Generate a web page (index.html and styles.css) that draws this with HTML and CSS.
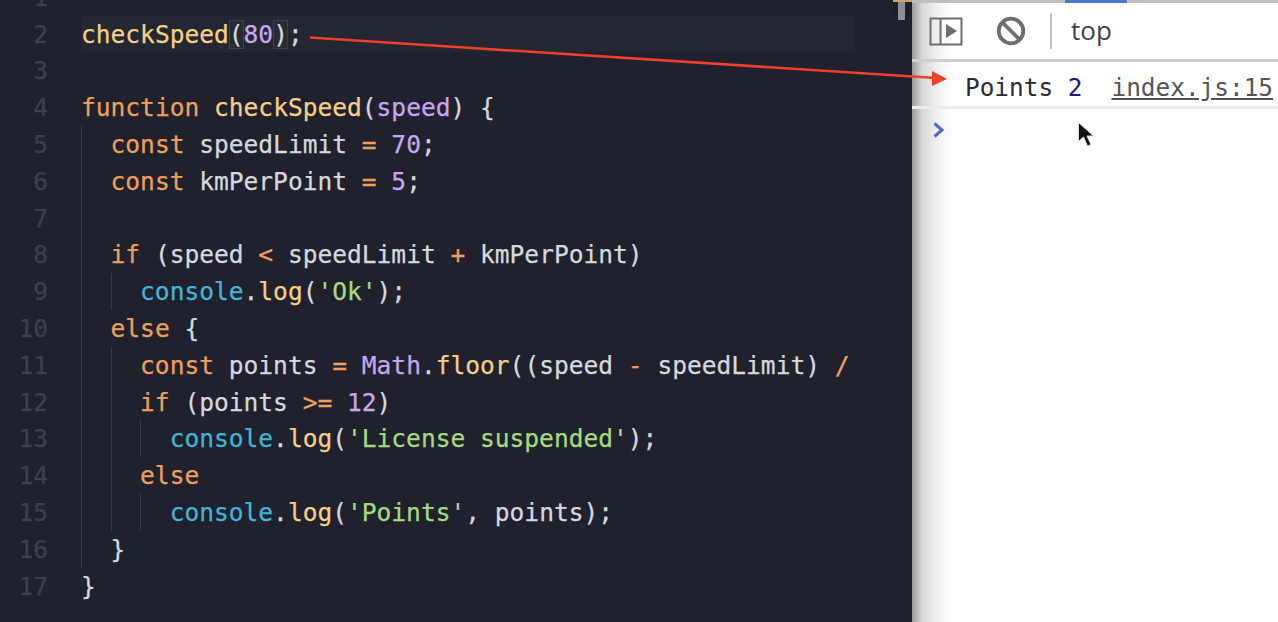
FILE: index.html
```html
<!DOCTYPE html>
<html lang="en">
<head>
<meta charset="utf-8">
<title>checkSpeed</title>
<link rel="stylesheet" href="styles.css">
</head>
<body>
<div class="app">
  <main class="editor">
    <div class="code">
      <div class="row first"><span class="num">1</span><div class="line"></div></div>
      <div class="row active"><span class="num">2</span><div class="line"><span class="txt"><span class="fn">checkSpeed</span><span class="br">(</span><span class="nm">80</span><span class="br">)</span>;</span></div></div>
      <div class="row"><span class="num">3</span><div class="line"></div></div>
      <div class="row"><span class="num">4</span><div class="line"><span class="txt"><span class="kw">function</span> <span class="fn">checkSpeed</span>(<span class="pr">speed</span>) {</span></div></div>
      <div class="row"><span class="num">5</span><div class="line"><i class="g"></i><span class="txt"><span class="kw">const</span> speedLimit <span class="kw">=</span> <span class="nm">70</span>;</span></div></div>
      <div class="row"><span class="num">6</span><div class="line"><i class="g"></i><span class="txt"><span class="kw">const</span> kmPerPoint <span class="kw">=</span> <span class="nm">5</span>;</span></div></div>
      <div class="row"><span class="num">7</span><div class="line"><i class="g"></i></div></div>
      <div class="row"><span class="num">8</span><div class="line"><i class="g"></i><span class="txt"><span class="kw">if</span> (speed <span class="kw">&lt;</span> speedLimit <span class="kw">+</span> kmPerPoint)</span></div></div>
      <div class="row"><span class="num">9</span><div class="line"><i class="g"></i><i class="g"></i><span class="txt"><span class="ob">console</span>.<span class="fn">log</span>(<span class="st">'Ok'</span>);</span></div></div>
      <div class="row"><span class="num">10</span><div class="line"><i class="g"></i><span class="txt"><span class="kw">else</span> {</span></div></div>
      <div class="row"><span class="num">11</span><div class="line"><i class="g"></i><i class="g"></i><span class="txt"><span class="kw">const</span> points <span class="kw">=</span> <span class="nm">Math</span>.<span class="fn">floor</span>((speed <span class="kw">-</span> speedLimit) <span class="kw">/</span></span></div></div>
      <div class="row"><span class="num">12</span><div class="line"><i class="g"></i><i class="g"></i><span class="txt"><span class="kw">if</span> (points <span class="kw">&gt;=</span> <span class="nm">12</span>)</span></div></div>
      <div class="row"><span class="num">13</span><div class="line"><i class="g"></i><i class="g"></i><i class="g"></i><span class="txt"><span class="ob">console</span>.<span class="fn">log</span>(<span class="st">'License suspended'</span>);</span></div></div>
      <div class="row"><span class="num">14</span><div class="line"><i class="g"></i><i class="g"></i><span class="txt"><span class="kw">else</span></span></div></div>
      <div class="row"><span class="num">15</span><div class="line"><i class="g"></i><i class="g"></i><i class="g"></i><span class="txt"><span class="ob">console</span>.<span class="fn">log</span>(<span class="st">'Points'</span>, points);</span></div></div>
      <div class="row"><span class="num">16</span><div class="line"><i class="g"></i><span class="txt">}</span></div></div>
      <div class="row"><span class="num">17</span><div class="line"><span class="txt">}</span></div></div>
    </div>
    <div class="rail"><span class="thumb"></span></div>
  </main>
  <aside class="devtools">
    <div class="tabstrip"><span class="tab"></span></div>
    <div class="toolbar">
      <svg class="ico-side" width="34" height="30" viewBox="0 0 34 30" aria-hidden="true"><path d="M1.500 2.500h31v26h-31zM11.500 2.500v26" fill="none" stroke="#6e6e6e" stroke-width="2"/><path d="M17 8v14l11-7z" fill="#6e6e6e"/></svg>
      <svg class="ico-clear" width="30" height="30" viewBox="0 0 30 30" aria-hidden="true"><circle cx="15" cy="15" r="12.300" fill="none" stroke="#6e6e6e" stroke-width="3.800"/><path d="M6 6l18 18" stroke="#6e6e6e" stroke-width="3.800"/></svg>
      <span class="sep"></span>
      <span class="ctx">top</span>
    </div>
    <div class="msg"><span class="log">Points <b class="val">2</b></span><a class="src">index.js:15</a></div>
    <div class="prompt"><svg width="14" height="18" viewBox="0 0 14 18" aria-hidden="true"><path d="M2.500 2.500L10 9l-7.500 6.500" fill="none" stroke="#4a6fd0" stroke-width="3"/></svg></div>
  </aside>
</div>
<svg class="arrow" width="1278" height="622" viewBox="0 0 1278 622" aria-hidden="true"><path d="M310 37.500L936 78" stroke="#ee3f28" stroke-width="2.600"/><path d="M947 79L932 71v15z" fill="#ee3f28"/></svg>
<svg class="cursor" width="18" height="30" viewBox="0 0 18 30" aria-hidden="true"><path d="M1.500 1.500v19l5-4.500 4 9 3.500-1.500-4-8.500h6.500z" fill="#111" stroke="#ddd" stroke-width="1"/></svg>
</body>
</html>
```

FILE: styles.css
```css
html, body { margin: 0; height: 100%; overflow: hidden; }
body { position: relative; background: #1f222c; }
.app { display: flex; height: 622px; }
.editor { display: flex; width: 912px; flex: none; background: #1f222c; overflow: hidden; }
.code { width: 855px; flex: none; font: 24.55px/38px "DejaVu Sans Mono", monospace; color: #d5d8de; overflow: hidden; -webkit-text-stroke: 0.25px; }
.row { display: flex; height: 36.8px; overflow: hidden; }
.row.first { margin-top: -21.200px; }
.num { width: 48px; margin-right: 33px; flex: none; text-align: right; color: #3a404c; }
.line { flex: 1; display: flex; overflow: hidden; min-width: 0; }
.active .line { background: #232731; }
.g { flex: none; width: 29.55px; box-sizing: border-box; border-left: 1.500px solid #363b46; }
.txt { flex: none; white-space: pre; }
.fn { color: #f5cf88; }
.kw { color: #ee9f5c; }
.nm, .pr { color: #c8a6f0; }
.ob { color: #43b5d6; }
.st { color: #a5da80; }
.br { background: #252c34; box-shadow: inset 0 0 0 1px #3a424c; }
.rail { flex: 1; display: flex; justify-content: flex-end; background: #1f222c; }
.thumb { display: block; width: 19px; height: 20px; box-sizing: border-box; background: linear-gradient(90deg, #1c2029 5px, #8d8f95 5px, #8d8f95 12px, #1c2029 12px); background-color: #1c2029; border-top: 2px solid #c9a573; }
.devtools { flex: 1; display: flex; flex-direction: column; background: linear-gradient(90deg, #9a9a9a 0, #d8d8d8 10px, #f4f4f4 28px, #fff 42px); font-family: "DejaVu Sans Mono", monospace; }
.tabstrip { height: 3px; background: #bfbfbf; padding-left: 153px; flex: none; }
.tab { display: block; width: 62px; height: 3px; background: #4f76cf; }
.toolbar { height: 59px; flex: none; box-sizing: border-box; display: flex; align-items: center; border-bottom: 3px solid #cfcfcf; padding-left: 17px; }
.ico-clear { margin-left: 33px; }
.sep { width: 2px; height: 36px; margin-left: 24px; background: #c4c4c4; }
.ctx { margin-left: 19px; padding-bottom: 2px; font: 26px "Open Sans", sans-serif; color: #45404a; }
.msg { height: 47px; flex: none; box-sizing: border-box; display: flex; justify-content: space-between; align-items: center; padding: 7px 5px 0 53px; border-bottom: 3px solid #ebebeb; font-size: 24.4px; color: #2a2a30; }
.log { white-space: pre; }
.val { font-weight: normal; color: #1c1490; }
.src { color: #555; text-decoration: underline; }
.prompt { padding: 12px 0 0 20px; line-height: 0; }
.arrow { position: absolute; left: 0; top: 0; pointer-events: none; }
.cursor { position: absolute; left: 1077px; top: 121px; }
```
